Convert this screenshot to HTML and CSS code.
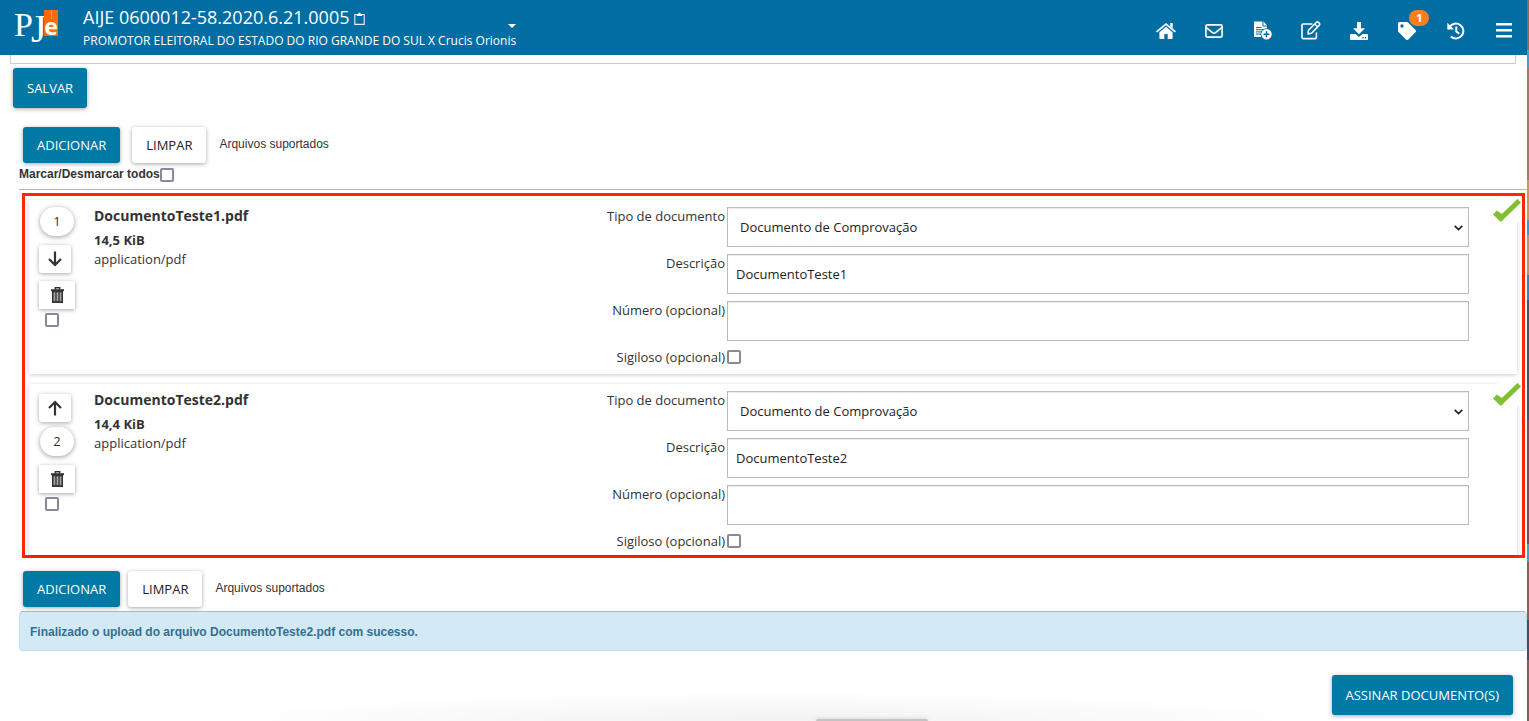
FILE: index.html
```
<!DOCTYPE html>
<html lang="pt-BR">
<head>
<meta charset="utf-8">
<title>PJe - AIJE 0600012-58.2020.6.21.0005</title>
<link rel="stylesheet" href="styles.css">
</head>
<body>
<svg class="defs" aria-hidden="true">
  <symbol id="trash" viewBox="0 0 13 16">
    <path fill="none" stroke="#333" stroke-width="1.4" d="M4.2 2.6V.8h4.6v1.8"/>
    <path fill="#333" d="M0 2.2h13v1.9H0z"/>
    <path fill="#333" d="M1 4h11v12H1z"/>
    <path fill="#a5a5a5" d="M2.6 5.3h1.7v9H2.6zM5.6 5.3h1.8v9H5.6zM8.7 5.3h1.7v9H8.7z"/>
  </symbol>
  <symbol id="arrow-down" viewBox="0 0 14 16">
    <path fill="none" stroke="#333" stroke-width="2.2" d="M7 .5v13M1 8l6 6 6-6"/>
  </symbol>
  <symbol id="arrow-up" viewBox="0 0 14 16">
    <path fill="none" stroke="#333" stroke-width="2.2" d="M7 15.5v-13M1 8l6-6 6 6"/>
  </symbol>
  <symbol id="tick" viewBox="0 0 28 24">
    <path fill="#83bf35" d="M0 15.5l4-4 4.700 3.600L24.500 0 28 3.500 7.800 23z"/>
  </symbol>
</svg>

<div class="app">
  <header class="topbar">
    <a class="logo" href="#" aria-label="PJe">
      <span class="logo-p">P</span><span class="logo-j">J</span><span class="logo-e">e</span>
    </a>
    <div class="case">
      <div class="case-number">AIJE 0600012-58.2020.6.21.0005
        <button class="copy" aria-label="Copiar número"><svg viewBox="0 0 11 13" width="11" height="13"><path fill="none" stroke="#e6f1f7" stroke-width="1.1" d="M3 2.500H.8v9.900h9.400V2.500H8"/><path fill="#fff" d="M2.800 4V2h1.500C4.300.4 6.700.4 6.700 2h1.500v2z"/></svg></button>
      </div>
      <button class="parties">PROMOTOR ELEITORAL DO ESTADO DO RIO GRANDE DO SUL X Crucis Orionis<span class="caret"></span></button>
    </div>
    <nav class="tools">
      <button class="tool" aria-label="Início"><svg viewBox="0 0 20 18" width="20" height="18"><path fill="#fff" d="M10 4.800l6.600 5.500V16q0 .9-.9.900h-4v-5H8.300v5h-4q-.9 0-.9-.9v-5.700z"/><path fill="none" stroke="#fff" stroke-width="1.700" d="M.6 9.800L10 2l9.400 7.800"/><path fill="#fff" d="M14.200 1h2.500v5.500l-2.500-2z"/></svg></button>
      <button class="tool" aria-label="Mensagens"><svg viewBox="0 0 18 14" width="18" height="14"><rect x=".9" y=".9" width="16.200" height="12.200" rx="1.300" fill="none" stroke="#fff" stroke-width="1.600"/><path fill="none" stroke="#fff" stroke-width="1.600" d="M1.300 3.700l6.200 5q1.500 1 3 0l6.200-5"/></svg></button>
      <button class="tool" aria-label="Juntar documentos"><svg viewBox="0 0 19 19" width="19" height="19"><path fill="#fff" d="M1 .5h8.500v5H14v10.500H1z"/><path fill="#fff" d="M10.500.5L14 4.500h-3.500z"/><path stroke="#006ea2" stroke-width="1" d="M3 6.500h5.500M3 8.700h8M3 10.900h7M3 13.100h5"/><circle cx="13.500" cy="13.300" r="6" fill="#006ea2"/><circle cx="13.500" cy="13.300" r="5.200" fill="#fff"/><path stroke="#006ea2" stroke-width="1.500" d="M13.500 10.300v6M10.500 13.300h6"/></svg></button>
      <button class="tool" aria-label="Editar"><svg viewBox="0 0 20 19" width="20" height="19"><path fill="none" stroke="#fff" stroke-width="1.600" d="M11.500 3H2q-1 0-1 1v12.600q0 1 1 1h12.400q1 0 1-1V11.500"/><path fill="none" stroke="#fff" stroke-width="1.600" stroke-linejoin="round" d="M7 12.900l.5-3.700L15.500 1.300q1-.8 2 .1l.8.900q.8 1-.1 2L10.500 12.200zM13.800 3l3 3"/></svg></button>
      <button class="tool" aria-label="Download"><svg viewBox="0 0 18 18" width="18" height="18"><path fill="#fff" d="M7 0h4v6.200h4L9 12.300 3 6.200h4z"/><path fill="#fff" d="M1 12h4.500L9 15l3.500-3H17q1 0 1 1v4q0 1-1 1H1q-1 0-1-1v-4q0-1 1-1z"/><path fill="#006ea2" d="M12.300 15.100h1.300v1.300h-1.300zM14.900 15.100h1.300v1.300h-1.300z"/></svg></button>
      <button class="tool" aria-label="Etiquetas"><svg viewBox="0 0 512 512" width="18" height="18"><path fill="#fff" d="M0 252V48C0 21 21 0 48 0h204a48 48 0 0 1 34 14l212 212c19 19 19 49 0 68L294 498c-19 19-49 19-68 0L14 286A48 48 0 0 1 0 252zM112 64a48 48 0 1 0 0 96 48 48 0 0 0 0-96z"/></svg><span class="badge">1</span></button>
      <button class="tool" aria-label="Histórico"><svg viewBox="0 0 18 18" width="18" height="18"><path fill="none" stroke="#fff" stroke-width="2" d="M2.500 5A7.500 7.500 0 1 1 3.800 14.600"/><path fill="#fff" d="M.3.800v6.700H7z"/><path fill="none" stroke="#fff" stroke-width="2" d="M9.300 4.500v5l3 2.200"/></svg></button>
      <button class="tool" aria-label="Menu"><svg viewBox="0 0 16 15" width="16" height="15"><path fill="#fff" d="M0 0h16v2.500H0zM0 6h16v2.500H0zM0 12h16v2.500H0z"/></svg></button>
    </nav>
  </header>

  <main>
    <div class="editor-end"></div>
    <button class="btn primary save">SALVAR</button>

    <div class="actions">
      <button class="btn primary">ADICIONAR</button>
      <button class="btn plain">LIMPAR</button>
      <span class="supported">Arquivos suportados</span>
    </div>
    <label class="mark-all">Marcar/Desmarcar todos<input class="check" type="checkbox"></label>

    <section class="files">
      <article class="card">
        <div class="controls">
          <div class="order first"><span class="position">1</span><button class="icon-btn" aria-label="Mover para baixo"><svg width="14" height="16"><use href="#arrow-down"/></svg></button></div>
          <button class="icon-btn trash" aria-label="Excluir"><svg width="13" height="16"><use href="#trash"/></svg></button>
          <input class="check select-file" type="checkbox" aria-label="Selecionar DocumentoTeste1.pdf">
        </div>
        <div class="info"><h2>DocumentoTeste1.pdf</h2><strong>14,5 KiB</strong><span>application/pdf</span></div>
        <form class="fields">
          <label for="tipo1">Tipo de documento</label>
          <div class="select-box"><select id="tipo1"><option>Documento de Comprovação</option></select><svg class="chevron" viewBox="0 0 9 6" width="9" height="6"><path fill="none" stroke="#222" stroke-width="1.700" d="M.7.800l3.800 3.800L8.300.800"/></svg></div>
          <label for="desc1">Descrição</label><input id="desc1" type="text" value="DocumentoTeste1">
          <label for="num1">Número (opcional)</label><input id="num1" type="text">
          <label for="sig1">Sigiloso (opcional)</label><input id="sig1" class="check" type="checkbox">
        </form>
        <span class="done"><svg width="28" height="24"><use href="#tick"/></svg></span>
      </article>

      <article class="card">
        <div class="controls">
          <div class="order last"><button class="icon-btn" aria-label="Mover para cima"><svg width="14" height="16"><use href="#arrow-up"/></svg></button><span class="position">2</span></div>
          <button class="icon-btn trash" aria-label="Excluir"><svg width="13" height="16"><use href="#trash"/></svg></button>
          <input class="check select-file" type="checkbox" aria-label="Selecionar DocumentoTeste2.pdf">
        </div>
        <div class="info"><h2>DocumentoTeste2.pdf</h2><strong>14,4 KiB</strong><span>application/pdf</span></div>
        <form class="fields">
          <label for="tipo2">Tipo de documento</label>
          <div class="select-box"><select id="tipo2"><option>Documento de Comprovação</option></select><svg class="chevron" viewBox="0 0 9 6" width="9" height="6"><path fill="none" stroke="#222" stroke-width="1.700" d="M.7.800l3.800 3.800L8.300.800"/></svg></div>
          <label for="desc2">Descrição</label><input id="desc2" type="text" value="DocumentoTeste2">
          <label for="num2">Número (opcional)</label><input id="num2" type="text">
          <label for="sig2">Sigiloso (opcional)</label><input id="sig2" class="check" type="checkbox">
        </form>
        <span class="done"><svg width="28" height="24"><use href="#tick"/></svg></span>
      </article>
    </section>

    <div class="actions bottom">
      <button class="btn primary">ADICIONAR</button>
      <button class="btn plain">LIMPAR</button>
      <span class="supported">Arquivos suportados</span>
    </div>
    <div class="message" role="status">Finalizado o upload do arquivo DocumentoTeste2.pdf com sucesso.</div>
    <div class="sign"><button class="btn primary">ASSINAR DOCUMENTO(S)</button></div>
  </main>
</div>
<div class="desktop-edge"></div>
<div class="dock-shadow"><span class="dock-tab"></span></div>
</body>
</html>
```
FILE: styles.css
```
* { box-sizing: border-box; }

body {
  margin: 0;
  min-height: 100vh;
  display: flex;
  overflow: hidden;
  position: relative;
  background: #fff;
  color: #333;
  font: 13px/18px "Open Sans", sans-serif;
}

button, input, select { font: inherit; color: inherit; }
button { border: 0; padding: 0; background: none; }
.defs { position: absolute; width: 0; height: 0; }
svg { display: block; }

.app { flex: 1; min-width: 0; }

.topbar {
  display: flex;
  height: 55px;
  background: #006ea2;
  color: #fff;
}

.logo {
  display: flex;
  align-items: flex-start;
  width: 83px;
  padding: 5px 0 0 14px;
  color: #fff;
  text-decoration: none;
}
.logo-p { width: 17px; font: 34px/40px "Liberation Serif", serif; }
.logo-j { width: 13px; font: 40px/48px "Liberation Serif", serif; }
.logo-e {
  width: 14px;
  height: 26px;
  margin-top: 5px;
  background: linear-gradient(90deg, transparent 50%, #ff9a4a 50%, #ff9a4a 57%, transparent 57%) top / 14px 9px no-repeat, #ff6b00;
  font: bold 23px/32px "Open Sans", sans-serif;
  text-align: center;
}

.case { display: flex; flex-direction: column; align-items: flex-start; padding-top: 5px; }
.case-number { display: flex; align-items: center; gap: 5px; font-size: 18px; line-height: 24px; }
.copy { padding-top: 3px; }
.parties { position: relative; font-size: 12px; line-height: 24px; white-space: nowrap; }
.caret {
  position: absolute;
  right: 0;
  top: -5px;
  border: 4px solid transparent;
  border-top-color: #fff;
  border-bottom: 0;
}

.tools {
  display: flex;
  align-items: center;
  justify-content: space-between;
  width: 386px;
  margin: 0 -1px 0 auto;
  padding-top: 6px;
}
.tool { position: relative; display: flex; justify-content: center; width: 48px; }
.badge {
  position: absolute;
  left: 26px;
  top: -12px;
  width: 20px;
  height: 16px;
  border-radius: 8px;
  background: #fd7e20;
  font: bold 11px/16px "Open Sans", sans-serif;
  text-align: center;
}

.editor-end {
  height: 9px;
  margin: 0 11px 4px 10px;
  border: 1px solid #ccc;
  border-top: 0;
}

.btn {
  height: 36px;
  padding: 0 14px;
  border-radius: 3px;
  box-shadow: 0 1px 4px rgba(0, 0, 0, .35);
  white-space: nowrap;
}
.primary { background: #0079a5; color: #fff; }
.plain { background: #fff; color: #222; }
.save, .sign .btn { height: 40px; }
.save { display: block; margin-left: 13px; }

.actions { display: flex; align-items: center; gap: 12px; margin: 19px 0 0 23px; }
.supported { padding: 0 0 2px 1px; font: 12px/16px "Liberation Sans", sans-serif; }
.actions.bottom { gap: 8px; margin-top: 13px; }
.bottom .supported { padding-left: 5px; }

.check {
  appearance: none;
  width: 14px;
  height: 14px;
  margin: 0;
  border: 2px solid #8a8899;
  border-radius: 2px;
  background: #fff;
}
.mark-all {
  display: flex;
  align-items: center;
  height: 27px;
  margin-left: 19px;
  padding-bottom: 3px;
  border-bottom: 1px solid #b3b3b3;
  font: bold 12px/17px "Liberation Sans", sans-serif;
}

.files {
  display: grid;
  gap: 10px;
  margin: 3px 2px 0 22px;
  padding: 4px 5px 0 4px;
  border: 3px solid #ff2600;
}
.card {
  position: relative;
  display: grid;
  grid-template-columns: 65px minmax(0, 1fr) 60%;
  min-height: 174px;
  padding: 7px 48px 7px 0;
  box-shadow: 0 1px 4px rgba(0, 0, 0, .2);
}
.card:last-child { min-height: 171px; padding-bottom: 4px; }

.controls { display: flex; flex-direction: column; align-items: flex-start; padding-left: 10px; }
.order { display: flex; flex-direction: column; height: 74px; gap: 9px; }
.order.last { padding-top: 3px; gap: 5px; }
.position {
  width: 34px;
  height: 29px;
  margin-left: 1px;
  border-radius: 15px;
  background: #fff;
  box-shadow: 0 1px 5px rgba(0, 0, 0, .4);
  line-height: 28px;
  text-align: center;
}
.icon-btn {
  display: flex;
  align-items: center;
  justify-content: center;
  width: 32px;
  height: 28px;
  border-radius: 3px;
  background: #fff;
  box-shadow: 0 1px 4px rgba(0, 0, 0, .35);
}
.trash { width: 36px; border-radius: 0; }
.select-file { margin: 4px 0 0 6px; }

.info { display: flex; flex-direction: column; line-height: 19px; }
.info h2 { margin: 0 0 6px; font-size: 14px; line-height: 18px; }

.fields {
  display: grid;
  grid-template-columns: 120px minmax(0, 1fr);
  gap: 7px 2px;
  align-items: start;
  align-content: start;
}
.fields label { text-align: right; white-space: nowrap; }
.fields input[type="text"], .fields select {
  display: block;
  width: 100%;
  height: 40px;
  padding: 0 8px;
  border: 1px solid #bbb;
  border-radius: 0;
  background: #fff;
  box-shadow: inset 0 1px 1px rgba(0, 0, 0, .08);
  color: #222;
}
.fields select { appearance: none; padding-left: 12px; }
.fields .check { margin-top: 2px; }
.select-box { position: relative; }
.chevron { position: absolute; right: 6px; top: 18px; pointer-events: none; }
.done {
  position: absolute;
  top: -3px;
  right: -4px;
  padding: 2px 0 4px 2px;
  border-radius: 14px;
  background: #fff;
}

.message {
  margin: 4px 0 0 19px;
  padding: 11px 10px 9px;
  border: 1px solid #b8e2ec;
  border-top-color: #a4bcc3;
  border-radius: 4px;
  background: #d4e9f6;
  color: #31708f;
  font: bold 12px/18px "Liberation Sans", sans-serif;
}
.sign { display: flex; justify-content: flex-end; padding: 24px 14px 6px; }

.desktop-edge {
  width: 2px;
  background: linear-gradient(#8a6a60 0 50px, #3fa0cc 50px 68px, #a07a66 68px 180px, #c89a55 180px 220px, #2e9bd0 220px 235px, #c0935a 235px 275px, #2f86b4 275px 300px, #3a5570 300px 420px, #7a4f4c 420px 544px, #3fa0cc 544px 562px, #8a5f55 562px 620px, #4b4a60 620px 660px, #7f5f5a 660px);
}

/* Soft shadow of the dock along the bottom edge */
.dock-shadow {
  position: absolute;
  left: 13%;
  right: 12%;
  bottom: 0;
  height: 30px;
  display: flex;
  justify-content: center;
  align-items: flex-end;
  background: radial-gradient(ellipse 50% 100% at bottom, rgba(0, 0, 0, .05), transparent);
  pointer-events: none;
}
.dock-tab {
  width: 112px;
  height: 2px;
  margin-left: 200px;
  border-radius: 3px 3px 0 0;
  background: #c4c4c4;
  box-shadow: 0 0 4px rgba(0, 0, 0, .2);
}
```
